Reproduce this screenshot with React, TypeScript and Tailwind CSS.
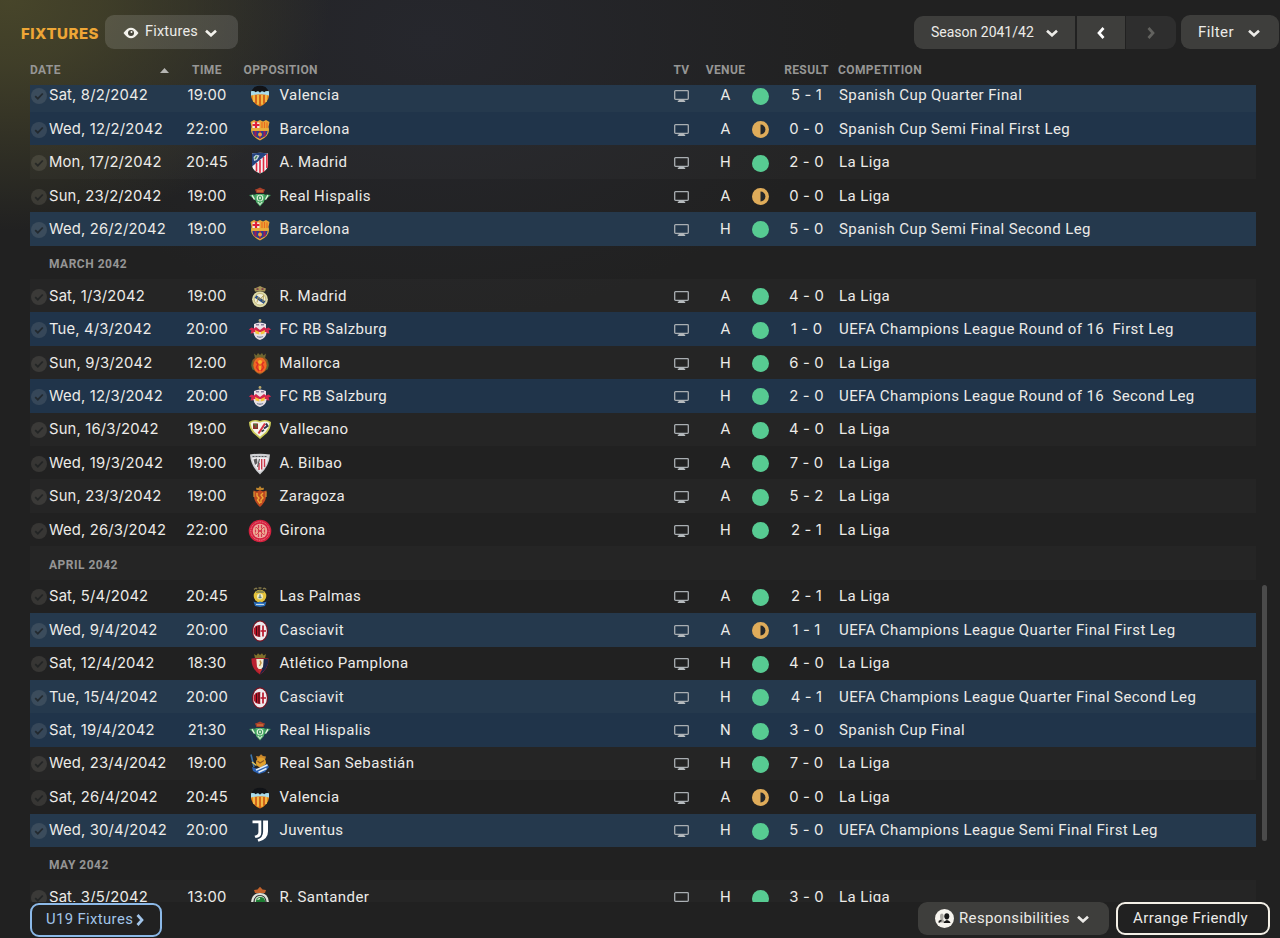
import React from 'react';

type Outcome = 'win' | 'draw';

type Fixture = {
  date: string;
  time: string;
  club: string;
  venue: string;
  outcome: Outcome;
  score: string;
  competition: string;
  cup?: boolean;
};

type Row = Fixture | { month: string };

const f = (
  date: string,
  time: string,
  club: string,
  venue: string,
  score: string,
  competition: string,
  outcome: Outcome = 'win'
): Fixture => ({ date, time, club, venue, score, competition, outcome, cup: competition !== 'La Liga' });

const rows: Row[] = [
  f('Sat, 8/2/2042', '19:00', 'Valencia', 'A', '5 - 1', 'Spanish Cup Quarter Final'),
  f('Wed, 12/2/2042', '22:00', 'Barcelona', 'A', '0 - 0', 'Spanish Cup Semi Final First Leg', 'draw'),
  f('Mon, 17/2/2042', '20:45', 'A. Madrid', 'H', '2 - 0', 'La Liga'),
  f('Sun, 23/2/2042', '19:00', 'Real Hispalis', 'A', '0 - 0', 'La Liga', 'draw'),
  f('Wed, 26/2/2042', '19:00', 'Barcelona', 'H', '5 - 0', 'Spanish Cup Semi Final Second Leg'),
  { month: 'MARCH 2042' },
  f('Sat, 1/3/2042', '19:00', 'R. Madrid', 'A', '4 - 0', 'La Liga'),
  f('Tue, 4/3/2042', '20:00', 'FC RB Salzburg', 'A', '1 - 0', 'UEFA Champions League Round of 16  First Leg'),
  f('Sun, 9/3/2042', '12:00', 'Mallorca', 'H', '6 - 0', 'La Liga'),
  f('Wed, 12/3/2042', '20:00', 'FC RB Salzburg', 'H', '2 - 0', 'UEFA Champions League Round of 16  Second Leg'),
  f('Sun, 16/3/2042', '19:00', 'Vallecano', 'A', '4 - 0', 'La Liga'),
  f('Wed, 19/3/2042', '19:00', 'A. Bilbao', 'A', '7 - 0', 'La Liga'),
  f('Sun, 23/3/2042', '19:00', 'Zaragoza', 'A', '5 - 2', 'La Liga'),
  f('Wed, 26/3/2042', '22:00', 'Girona', 'H', '2 - 1', 'La Liga'),
  { month: 'APRIL 2042' },
  f('Sat, 5/4/2042', '20:45', 'Las Palmas', 'A', '2 - 1', 'La Liga'),
  f('Wed, 9/4/2042', '20:00', 'Casciavit', 'A', '1 - 1', 'UEFA Champions League Quarter Final First Leg', 'draw'),
  f('Sat, 12/4/2042', '18:30', 'Atlético Pamplona', 'H', '4 - 0', 'La Liga'),
  f('Tue, 15/4/2042', '20:00', 'Casciavit', 'H', '4 - 1', 'UEFA Champions League Quarter Final Second Leg'),
  f('Sat, 19/4/2042', '21:30', 'Real Hispalis', 'N', '3 - 0', 'Spanish Cup Final'),
  f('Wed, 23/4/2042', '19:00', 'Real San Sebastián', 'H', '7 - 0', 'La Liga'),
  f('Sat, 26/4/2042', '20:45', 'Valencia', 'A', '0 - 0', 'La Liga', 'draw'),
  f('Wed, 30/4/2042', '20:00', 'Juventus', 'H', '5 - 0', 'UEFA Champions League Semi Final First Leg'),
  { month: 'MAY 2042' },
  f('Sat, 3/5/2042', '13:00', 'R. Santander', 'H', '3 - 0', 'La Liga'),
];

const crests: Record<string, React.ReactNode> = {
  Valencia: (
    <>
      <path d="M3 7Q12 2 21 7V12Q20 19 12 22.5Q4 19 3 12Z" fill="#e98a1c" />
      <path d="M6 11V18M10 11V20.5M14 11V20.5M18 11V18" stroke="#f7d35a" strokeWidth="1.3" />
      <path d="M8 11V19.5M16 11V19.5M12 11V22" stroke="#c2481d" strokeWidth="1.1" />
      <path d="M3 7H21V11.5Q12 9 3 11.5Z" fill="#a9dcec" />
      <path d="M6.5 3Q12 .3 17.5 3L21 7.3Q18 6.4 16.2 8.3Q14 6.2 12 8.8Q10 6.2 7.8 8.3Q6 6.4 3 7.3Z" fill="#111317" />
    </>
  ),
  Barcelona: (
    <>
      <path d="M2.5 4L6 2L9 3.5L12 2L15 3.5L18 2L21.5 4L20.5 9Q23 17 12 22.5Q1 17 3.5 9Z" fill="#e9a636" />
      <path d="M4.5 4.5H11.5V10H4.5Z" fill="#f4e9e2" />
      <path d="M8 3.5V10M4.5 7H11.5" stroke="#e0203c" strokeWidth="2.2" />
      <path d="M14 4V10M16.5 4V10M19 4.5V10" stroke="#ea6a20" strokeWidth="1.1" />
      <path d="M3.5 10.3H20.5V12.7H3.5Z" fill="#e8b03c" />
      <path d="M4.5 13H19.5Q20 18 12 20.8Q4 18 4.5 13Z" fill="#2a3f92" />
      <path d="M7.5 13V18.5M12 13V20.5M16.5 13V18.5" stroke="#a01c55" strokeWidth="2" />
      <circle cx="12" cy="16.5" r="2" fill="#e8a23b" />
    </>
  ),
  'A. Madrid': (
    <>
      <path d="M4 2.5Q12 1 20 2.5V14Q19.5 20 12 22.5Q4.5 20 4 14Z" fill="#f3f1f3" />
      <path d="M8.5 12V20.5M12 9V22M15.5 6V21M18.9 3V17" stroke="#e02a40" strokeWidth="1.6" />
      <path d="M4 2.5Q12 1 19.5 2.5L4 15.5Z" fill="#24427e" />
      <path d="M5.5 6L8 3.7L11.5 4.5L9 9L6 10Z" fill="#c8d5dd" />
      <path d="M7 8L9 5" stroke="#4b8359" strokeWidth="1.4" />
    </>
  ),
  'Real Hispalis': (
    <>
      <path d="M8.5 8L7 4.5L9.5 3.8L12 2.5L14.5 3.8L17 4.5L15.5 8Z" fill="#a9402a" />
      <path d="M9 6H15" stroke="#d98b42" strokeWidth="1" />
      <path d="M1 10Q5 9 9 10V16Q5.5 15 4 12.5ZM23 10Q19 9 15 10V16Q18.5 15 20 12.5Z" fill="#3c9c5c" />
      <path d="M4 10.2L6.5 14.5M20 10.2L17.5 14.5" stroke="#e4efdc" strokeWidth="1.4" />
      <path d="M7.5 9H16.5L16 17L12 21.5L8 17Z" fill="#4fae6b" />
      <circle cx="12" cy="13" r="3.3" fill="#dcefd8" />
      <ellipse cx="12" cy="13" rx="1.5" ry="2" fill="none" stroke="#2f9250" strokeWidth="1.1" />
      <path d="M9.8 17L12 19.5L14.2 17" stroke="#dcefd8" strokeWidth="1.1" fill="none" />
    </>
  ),
  'R. Madrid': (
    <>
      <path d="M7 6.5L6 3.5L9 2.5L12 1L15 2.5L18 3.5L17 6.5Z" fill="#a79558" />
      <path d="M8.5 4.2H10.5M13.5 4.2H15.5" stroke="#7d3b4a" strokeWidth="1.7" />
      <circle cx="12" cy="14.3" r="7.9" fill="#dedba9" />
      <circle cx="12" cy="14.3" r="5.8" fill="#f0eed8" stroke="#b8a85f" strokeWidth=".7" />
      <path d="M7.5 11.5L16.5 17.5" stroke="#274d88" strokeWidth="3" />
      <path d="M9 17.5L10 12L12 14.5L15.5 10.5L15 17" stroke="#ad994c" strokeWidth=".9" fill="none" />
    </>
  ),
  'FC RB Salzburg': (
    <>
      <circle cx="12" cy="2.5" r="1.4" fill="#b8a66a" />
      <path d="M6 6Q12 3 18 6V13H6Z" fill="#ece0e6" />
      <path d="M8 6.8H11M13 6.8H16" stroke="#8a7f9a" strokeWidth="1.5" />
      <path d="M.8 11.5L3.5 9.5L6 10.5L8 9L12 12L16 9L18 10.5L20.5 9.5L23.2 11.5L20.5 12.5L21.5 15.5L17 15H7L2.5 15.5L3.5 12.5Z" fill="#d5264c" />
      <path d="M5.5 14H18.5Q18.5 20 12 22Q5.5 20 5.5 14Z" fill="#e5dde2" />
      <path d="M7 12L11.3 14V16.5L7.5 15.5Z M17 12L12.7 14V16.5L16.5 15.5Z" fill="#f4c63b" />
      <path d="M9 18.5Q12 20 15 18.5" stroke="#7f879e" strokeWidth="1.3" fill="none" />
    </>
  ),
  Mallorca: (
    <>
      <path d="M6 1.5L8.5 3.5L10 1L12 3L14 1L15.5 3.5L18 1.5L17 6.5H7Z" fill="#6e6631" />
      <path d="M4.5 8Q8 4 12 6Q16 4 19.5 8L20.5 14Q18 20 12 22.5Q6 20 3.5 14Z" fill="#8f5a26" />
      <ellipse cx="12" cy="13.3" rx="6.5" ry="7.8" fill="#ef6a24" />
      <path d="M8 10L10 12L8.5 15.5L11 19M16 10L14 12L15.5 15.5L13 19" stroke="#e02e26" strokeWidth="1.5" fill="none" />
      <circle cx="12" cy="10" r="2" fill="#f7b42b" />
      <path d="M12 14V18" stroke="#f7b42b" strokeWidth="1.8" />
      <path d="M4.5 9.5Q3 14 5.5 18M19.5 9.5Q21 14 18.5 18" stroke="#526a35" strokeWidth="1.2" fill="none" />
    </>
  ),
  Vallecano: (
    <>
      <path d="M12 3Q18 .5 23 4Q23 10 19 15L12 21L5 15Q1 10 1 4Q6 .5 12 3Z" fill="#c9c957" />
      <path d="M12 4.5Q18 2.3 21.5 5Q21 10 17.5 14L12 18.8L6.5 14Q3 10 2.5 5Q6 2.3 12 4.5Z" fill="#f7f4ec" />
      <path d="M5 5.5H10V11H5Z" fill="#8e2f2b" />
      <path d="M5.5 6.5H8V9.5" stroke="#4d7c44" strokeWidth="1.3" fill="none" />
      <path d="M17 5.5L10.5 15.5" stroke="#d63346" strokeWidth="2" />
      <path d="M18 5.5L19.5 8L16 10.5" stroke="#2d3350" strokeWidth="2" fill="none" />
      <path d="M13.5 13.5L16 12" stroke="#343a44" strokeWidth="1.5" />
    </>
  ),
  'A. Bilbao': (
    <>
      <path d="M2 2.5Q12 1 22 2.5Q21.5 14 12 22.5Q2.5 14 2 2.5Z" fill="#cfd0d3" />
      <path d="M4 6Q12 5 20 6Q19 14 12 20Q5 14 4 6Z" fill="#f1edf0" />
      <path d="M4.5 4.5H19.5" stroke="#55565b" strokeWidth="1.2" strokeDasharray="2 1" />
      <path d="M11 11V18M13.7 7V17.5M16.5 7V15" stroke="#c93848" strokeWidth="1.4" />
      <path d="M5.5 7.5L9 6.5L9.5 11L7 13Z" fill="#5d5a5c" />
      <path d="M11.5 7L9.5 15" stroke="#5f6060" strokeWidth="1.2" />
    </>
  ),
  Zaragoza: (
    <>
      <path d="M8.5 5L8 2.8L10.5 3L12 1L13.5 3L16 2.8L15.5 5Z" fill="#bd842d" />
      <path d="M5.5 5.5L9 6.5L12 5L15 6.5L18.5 5.5L18 12Q17.5 17 12 22Q6.5 17 6 12Z" fill="#c14a22" />
      <path d="M9 8V11L11 13L9.5 15L12 18.5M15 8L13 10L15 13L13 15V18" stroke="#f0a836" strokeWidth="1.4" fill="none" />
      <path d="M6 6.5V12M18 6.5V12" stroke="#d89c33" strokeWidth="1.1" />
    </>
  ),
  Girona: (
    <>
      <circle cx="12" cy="12" r="11.3" fill="#d5213f" />
      <circle cx="12" cy="12" r="9.2" fill="none" stroke="#e88a92" strokeWidth="1" strokeDasharray="1 .8" />
      <circle cx="12" cy="12" r="7.3" fill="#eda79a" />
      <path d="M7.5 8.5V15.5M10.5 6V18M13.5 6V18M16.5 8.5V15.5" stroke="#d8394f" strokeWidth="1.2" />
      <path d="M6.5 10H17.5M6.5 14H17.5" stroke="#efc08a" strokeWidth=".9" />
      <path d="M8 16L16 8M8 8L16 16" stroke="#cf2541" strokeWidth=".8" />
    </>
  ),
  'Las Palmas': (
    <>
      <path d="M6 4.5Q8 2.5 9 4M10.5 3H13.5M15 4Q17 2.5 18 4.5" stroke="#837849" strokeWidth="1.5" fill="none" />
      <circle cx="12" cy="11" r="6.3" fill="#e3c23a" />
      <path d="M8 6.5L12 5L16 6.5V8H8Z" fill="#8b8a4e" />
      <circle cx="12" cy="11.5" r="3" fill="#f3edbd" />
      <path d="M12 9.5V12M10.5 12.5H13.5" stroke="#5c7f8a" strokeWidth="1.3" />
      <path d="M5.5 16.5Q9 18.5 12 16.5Q15 18.5 18.5 16.5L17 21L12 22L7 21Z" fill="#2c70bd" />
      <path d="M8 19.5H16" stroke="#c4d7df" strokeWidth="1.1" />
    </>
  ),
  Casciavit: (
    <>
      <ellipse cx="12" cy="12" rx="8" ry="10.7" fill="#7b1220" />
      <ellipse cx="12" cy="12" rx="6.9" ry="9.6" fill="#eceaed" />
      <path d="M12.5 6V18Q5.5 18 5.5 12Q5.5 6 12.5 6Z" fill="#b81729" />
      <path d="M8.5 7.5V16.5M11 6.5V17.5" stroke="#3d0e16" strokeWidth="1" />
      <path d="M12.5 6.5H16.5Q18.5 12 16.5 17.5H12.5Z" fill="#f0eef0" />
      <path d="M15 6.5V17.5M12.5 12H18" stroke="#b9172c" strokeWidth="1.7" />
    </>
  ),
  'Atlético Pamplona': (
    <>
      <path d="M6 2L8.5 3.5L10 1.2L12 3L14 1.2L15.5 3.5L18 2L17 6H7Z" fill="#80702b" />
      <path d="M3.5 6.5Q12 5.5 20.5 6.5Q21 17 12 22.5Q3 17 3.5 6.5Z" fill="#b9202f" />
      <path d="M14 7H20.5Q20.5 16.5 12 22.5Z" fill="#1b2448" />
      <path d="M8.3 7H15.7L15 15L12 18.5L9 15Z" fill="#f0ead4" />
      <path d="M12 8.5L13 11L11.5 14" stroke="#c19146" strokeWidth="1.5" fill="none" />
      <path d="M9.5 17L12 21L14.5 17" fill="#c8302e" />
    </>
  ),
  'Real San Sebastián': (
    <>
      <path d="M3 2.5L6 15" stroke="#3c75ad" strokeWidth="1.6" />
      <path d="M9 7L8 4L11 4.5L13 2.2L15 4L18 4.5L17 8Z" fill="#c8862c" />
      <circle cx="13" cy="10.5" r="5" fill="#e2a22e" />
      <path d="M9.5 9L12 11L16 8.5" stroke="#8d5724" strokeWidth="1.1" fill="none" />
      <path d="M4 15L10 17L19 11.5L21 15L17 20L11 22L5 19Z" fill="#2b62b4" />
      <path d="M8 18L19.5 13M10.5 20.3L18.5 16.5" stroke="#e4edf4" strokeWidth="1.5" />
      <path d="M4 10L8.5 13.5" stroke="#dfc45d" strokeWidth="1.4" />
      <circle cx="20.5" cy="20.5" r=".8" fill="#8ea3b5" />
    </>
  ),
  Juventus: (
    <>
      <path d="M4.5 1.5H13.3V13.5Q13.3 18.5 7.5 19L6.5 16.7Q10.4 16.2 10.4 13V4.2H4.5Z" fill="#fff" />
      <path d="M15.1 1.5H20V12.5Q20 20.5 10.5 22.7L9.5 20.5Q15.1 18.5 15.1 12.5Z" fill="#fff" />
    </>
  ),
  'R. Santander': (
    <>
      <path d="M7 7L6 4L9.5 3.5L12 .8L14.5 3.5L18 4L17 7Z" fill="#c3622b" />
      <path d="M3 18Q3 7 12 7Q21 7 21 18Z" fill="#dfe2da" />
      <path d="M5.2 18Q5.5 9 12 9Q18.5 9 18.8 18Z" fill="#2a2f30" />
      <circle cx="12" cy="15" r="5.3" fill="#cfdccb" />
      <circle cx="12.5" cy="15.5" r="4.6" fill="#1d7d33" />
      <path d="M9.5 13.5L12 12.3" stroke="#e2f0dd" strokeWidth="1.3" />
    </>
  ),
};

const Crest = ({ club }: { club: string }) => (
  <svg className="size-6 shrink-0 translate-y-px" viewBox="0 0 24 24">
    {crests[club]}
  </svg>
);

const Chevron = ({ className }: { className: string }) => (
  <svg className={className} viewBox="0 0 12 8" fill="none" stroke="currentColor" strokeWidth="2.6">
    <path d="M1 1.7L6 6.3L11 1.7" />
  </svg>
);

const SideChevron = ({ className, left }: { className: string; left?: boolean }) => (
  <svg className={className} viewBox="0 0 8 12" fill="none" stroke="currentColor" strokeWidth="2.7">
    <path d={left ? 'M6.5 1L2 6L6.5 11' : 'M1.5 1L6 6L1.5 11'} />
  </svg>
);

const CheckBadge = () => (
  <svg className="size-4 translate-y-px" viewBox="0 0 16 16">
    <circle cx="8" cy="8" r="8" fill="#fff3e0" fillOpacity=".1" />
    <path d="M4.2 8.2L6.8 10.7L11.8 5.5" stroke="#1a1c1e" strokeOpacity=".7" strokeWidth="1.8" fill="none" />
  </svg>
);

const TvIcon = () => (
  <svg className="h-3 w-[15px] translate-y-px" viewBox="0 0 15 12" fill="none">
    <rect x=".7" y=".7" width="13.6" height="8.6" rx=".8" stroke="#a9aeb2" strokeWidth="1.3" />
    <path d="M5.5 9.5H9.5L10.2 10.5H11.2V12H3.8V10.5H4.8Z" fill="#b5babd" />
  </svg>
);

const OutcomeDot = ({ outcome }: { outcome: Outcome }) => (
  <svg className="size-[17px] translate-y-px" viewBox="0 0 17 17">
    <circle cx="8.5" cy="8.5" r="8.5" fill={outcome === 'win' ? '#57cb92' : '#dfac5a'} />
    {outcome === 'draw' && <path d="M8.5 3.6A4.9 4.9 0 0 1 8.5 13.4Z" fill="#24272b" />}
  </svg>
);

const cols = 'grid grid-cols-[152px_50px_47.5px_379.5px_45px_43px_27px_65px_1fr] items-center';

// dates, kick-offs and scores
const numeric = "font-['Inter',sans-serif] text-[14.8px] tracking-[0.16px]";

const rowColor = (index: number, cup?: boolean) => {
  if (cup) return index % 2 ? 'bg-[#20344a]' : 'bg-[#25394d]';
  return index % 2 ? '' : 'bg-white/[0.02]';
};

const FixtureRow = ({ row, index }: { row: Row; index: number }) => {
  if ('month' in row) {
    return (
      <div className={`flex h-[33.42px] items-center pl-[19px] pt-[3px] text-xs font-bold tracking-[0.5px] text-[#959595] ${rowColor(index)}`}>
        {row.month}
      </div>
    );
  }
  return (
    <div className={`${cols} h-[33.42px] ${rowColor(index, row.cup)}`}>
      <div className="flex items-center gap-[2px] pl-px">
        <CheckBadge />
        <span className={numeric}>{row.date}</span>
      </div>
      <div className={`text-center ${numeric}`}>{row.time}</div>
      <div className="flex justify-center pl-[8.5px]">
        <Crest club={row.club} />
      </div>
      <div className="tracking-[0.38px]">{row.club}</div>
      <div className="flex justify-center">
        <TvIcon />
      </div>
      <div className="text-center">{row.venue}</div>
      <div className="flex justify-center">
        <OutcomeDot outcome={row.outcome} />
      </div>
      <div className={`text-center ${numeric}`}>{row.score}</div>
      <div className="whitespace-pre">{row.competition}</div>
    </div>
  );
};

const App = () => {
  return (
    <div className="flex h-[938px] w-[1280px] flex-col overflow-hidden bg-[#212121] bg-[radial-gradient(ellipse_320px_230px_at_10px_0px,#47452a_0%,#47452acc_28%,transparent_100%),radial-gradient(ellipse_420px_280px_at_430px_40px,#26272d_0%,transparent_100%)] font-['Roboto','Liberation_Sans',sans-serif] text-[15px] leading-5 tracking-[0.4px] text-[#ecebe8]">
      <header className="flex h-[62px] items-start pt-[15px]">
        <h1 className="mt-[9px] ml-[21px] w-[83.5px] font-['Inter',sans-serif] text-[15px] font-extrabold tracking-[0.5px] text-[#eea636]">FIXTURES</h1>
        <button className="flex h-[34px] w-[133px] items-center rounded-[9px] bg-white/[0.13] pb-px pl-[18.5px]">
          <svg className="mt-0.5 h-3 w-4" viewBox="0 0 16 12">
            <path d="M0.5 6Q8 -4.5 15.5 6Q8 16.5 0.5 6Z" fill="#f3f2ec" />
            <circle cx="8" cy="6" r="3" fill="#454439" />
            <circle cx="8.5" cy="5" r="1" fill="#f3f2ec" />
          </svg>
          <span className="w-[66px] pl-1.5 text-left text-[14.5px] tracking-[0.2px]">Fixtures</span>
          <Chevron className="mt-[3px] h-2 w-3 text-[#f3f2ec]" />
        </button>
        <div className="mt-px ml-auto flex h-[33px] gap-[1.5px] overflow-hidden rounded-[9px]">
          <button className="flex w-[161px] items-center bg-[#3e3e3c] pb-px pl-[17px] text-sm tracking-normal">
            <span className="w-[114.5px] text-left">Season 2041/42</span>
            <Chevron className="mt-0.5 h-2 w-3" />
          </button>
          <button className="flex w-12 items-center justify-center bg-[#3e3e3c]">
            <SideChevron className="h-3 w-2 text-white" left />
          </button>
          <button className="flex w-[50px] items-center justify-center bg-[#2e2e2e]">
            <SideChevron className="h-3 w-2 text-[#62625f]" />
          </button>
        </div>
        <button className="mr-px ml-[5px] flex h-[34px] w-[98px] items-center rounded-[9px] bg-[#3e3e3c] pb-px pl-[17px]">
          <span className="w-[50px] text-left">Filter</span>
          <Chevron className="mt-[3px] h-2 w-3" />
        </button>
      </header>

      <div className={`${cols} ml-[30px] h-[23px] w-[1226px] pb-2 text-xs font-bold tracking-[0.4px] text-[#969695]`}>
        <div className="flex items-center justify-between pr-[13px]">
          DATE
          <svg className="h-[5px] w-[9px]" viewBox="0 0 9 5">
            <path d="M0 5L4.5 0L9 5Z" fill="#b5b5b2" />
          </svg>
        </div>
        <div className="text-center">TIME</div>
        <div className="col-span-2 pl-[11.5px]">OPPOSITION</div>
        <div className="text-center">TV</div>
        <div className="text-center">VENUE</div>
        <div />
        <div className="text-center">RESULT</div>
        <div className="-ml-px">COMPETITION</div>
      </div>

      <main className="flex h-[817px]">
        <div className="ml-[30px] w-[1226px] overflow-hidden">
          <div className="-mt-[6.4px]">
            {rows.map((row, index) => (
              <FixtureRow key={index} row={row} index={index} />
            ))}
          </div>
        </div>
        <div className="mt-[500px] ml-1.5 h-[256px] w-[5px] rounded-full bg-[#4b4b4b]" />
      </main>

      <footer className="flex h-9 items-start pr-2.5 pl-[30px]">
        <button className="mt-px flex h-[33.5px] w-[132px] items-center gap-[3px] rounded-[9px] border-[2.5px] border-[#8cb9e8] pb-0.5 pl-3.5 text-[14.8px] text-[#a2c5e9]">
          U19 Fixtures
          <SideChevron className="mt-[3px] h-3 w-2" />
        </button>
        <button className="ml-auto flex h-[33px] w-[191px] items-center rounded-[9px] bg-[#3e3e3c] pb-px pl-[17px]">
          <svg className="mt-px size-[19px]" viewBox="0 0 19 19">
            <circle cx="9.5" cy="9.5" r="9.5" fill="#f6f4ee" />
            <path d="M3 13.5Q3 11 5.5 10.5Q4 4.5 7 4.5Q9.5 4.8 8.2 10.5L10 13.5Z" fill="#aaa8a2" />
            <path d="M4 13.5Q4.5 11.8 6.5 11.5" stroke="#171717" strokeWidth="1.4" fill="none" />
            <ellipse cx="11.8" cy="7.3" rx="2.5" ry="3.1" fill="#171717" />
            <path d="M8.5 14Q8.8 11.8 11.8 11Q15.2 11.8 15.5 14Z" fill="#171717" />
          </svg>
          <span className="ml-[5px] w-[118px] text-left tracking-[0.35px]">Responsibilities</span>
          <Chevron className="mt-0.5 h-2 w-3" />
        </button>
        <button className="ml-[7px] h-[33px] w-[154px] rounded-[9px] border-[2.5px] border-[#f3efe6] pr-[5px] pb-0.5 text-[15px]">Arrange Friendly</button>
      </footer>
    </div>
  );
};

export default App;
